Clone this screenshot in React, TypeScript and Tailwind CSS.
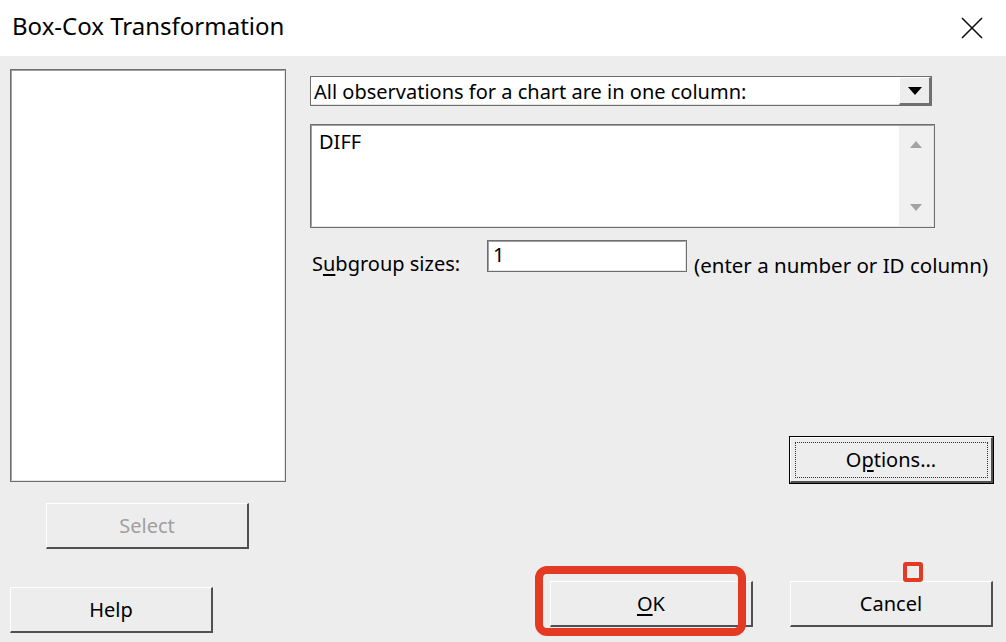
import React from "react"

const font = { fontFamily: '"Noto Sans", "Open Sans", sans-serif' }

function Btn({
  children,
  disabled,
  focused,
  className = "",
}: {
  children: React.ReactNode
  disabled?: boolean
  focused?: boolean
  className?: string
}) {
  return (
    <div
      className={
        "h-[46px] w-[203px] bg-[#ededed] border-t border-l border-t-white border-l-white border-b-2 border-r-2 border-b-[#505050] border-r-[#505050] flex items-center justify-center text-[20px] " +
        (focused ? "outline outline-1 outline-black " : "") +
        (disabled ? "text-[#a0a0a0] " : "text-black ") +
        className
      }
    >
      {focused ? (
        <div className="w-[193px] h-[36px] border border-dotted border-[#333] flex items-center justify-center">
          {children}
        </div>
      ) : (
        children
      )}
    </div>
  )
}

function Sunken({ className = "", children }: { className?: string; children?: React.ReactNode }) {
  return (
    <div className={"border border-[#6e6e6e] " + className}>
      <div className="w-full h-full border-t border-l border-t-[#a0a0a0] border-l-[#a0a0a0] border-b border-r border-b-[#e4e4e4] border-r-[#e4e4e4] bg-white">
        {children}
      </div>
    </div>
  )
}

export default function App() {
  return (
    <div className="w-[1006px] h-[642px] bg-[#ededed] overflow-hidden flex flex-col" style={font}>
      {/* TITLE BAR */}
      <div className="h-[56px] bg-white flex items-center justify-between pl-[12px] pr-[22px] pb-[4px] shrink-0">
        <span className="text-[24px] text-black">Box-Cox Transformation</span>
        <svg width="24" height="24" viewBox="0 0 24 24" className="mt-[4px]">
          <path d="M2 2 L22 22 M22 2 L2 22" stroke="#111" strokeWidth="1.6" fill="none" />
        </svg>
      </div>

      {/* BODY */}
      <div className="flex flex-1">
        {/* LEFT COLUMN */}
        <div className="w-[300px] pl-[10px] pt-[13px] flex flex-col">
          <Sunken className="w-[276px] h-[413px]" />
          <Btn disabled className="ml-[36px] mt-[21px]">Select</Btn>
          <Btn className="mt-[38px]">Help</Btn>
        </div>

        {/* RIGHT COLUMN */}
        <div className="flex-1 pl-[10px] pt-[20px] flex flex-col">
          {/* DROPDOWN */}
          <div className="w-[622px] h-[30px] border border-[#6e6e6e] bg-white flex">
            <div className="flex-1 border-b border-b-[#e4e4e4] flex items-center pl-[3px] pt-[3px] text-[20px] text-black">
              All observations for a chart are in one column:
            </div>
            <div className="w-[32px] h-full bg-[#ededed] border-t border-l border-t-white border-l-white border-b-2 border-r-2 border-b-[#707070] border-r-[#707070] flex items-center justify-center">
              <svg width="14" height="8" viewBox="0 0 14 8">
                <path d="M0 0 L14 0 L7 8 Z" fill="#000" />
              </svg>
            </div>
          </div>

          {/* TEXTBOX */}
          <Sunken className="w-[625px] h-[104px] mt-[18px]">
            <div className="flex h-full">
              <div className="flex-1 pl-[7px] pt-[2px] text-[20px] text-black leading-[28px]">DIFF</div>
              <div className="w-[34px] h-full bg-[#f0f0f0] flex flex-col items-center justify-between py-[14px]">
                <svg width="12" height="8" viewBox="0 0 12 8">
                  <path d="M0 8 L6 1 L12 8 Z" fill="#a3a3a3" />
                </svg>
                <svg width="12" height="8" viewBox="0 0 12 8">
                  <path d="M0 0 L12 0 L6 7 Z" fill="#a3a3a3" />
                </svg>
              </div>
            </div>
          </Sunken>

          {/* SUBGROUP */}
          <div className="flex items-center mt-[12px] h-[32px]">
            <span className="text-[20px] text-black pl-[2px] w-[177px] mt-[16px]">
              S<span className="underline underline-offset-[3px]">u</span>bgroup sizes:
            </span>
            <Sunken className="w-[200px] h-[32px]">
              <div className="pl-[4px] text-[20px] leading-[26px] text-black">1</div>
            </Sunken>
            <span className="text-[20.5px] text-black ml-[7px] mt-[18px]">(enter a number or ID column)</span>
          </div>

          {/* OPTIONS */}
          <div className="flex justify-end pr-[13px] mt-[165px]">
            <Btn focused>
              <span>
                O<span className="underline underline-offset-[3px]">p</span>tions...
              </span>
            </Btn>
          </div>

          {/* OK / CANCEL */}
          <div className="flex justify-end pr-[13px] mt-[98px] gap-[37px]">
            <div className="relative">
              <Btn>
                <span>
                  <span className="underline underline-offset-[3px]">O</span>K
                </span>
              </Btn>
              <div className="absolute left-[-15px] top-[-15px] w-[211px] h-[70px] border-[8px] border-[#e43a23] rounded-[12px]" />
            </div>
            <div className="relative">
              <Btn>Cancel</Btn>
              <div className="absolute left-[113px] top-[-19px] w-[20px] h-[20px] border-[4px] border-[#e43a23] rounded-[3px]" />
            </div>
          </div>
        </div>
      </div>
    </div>
  )
}
